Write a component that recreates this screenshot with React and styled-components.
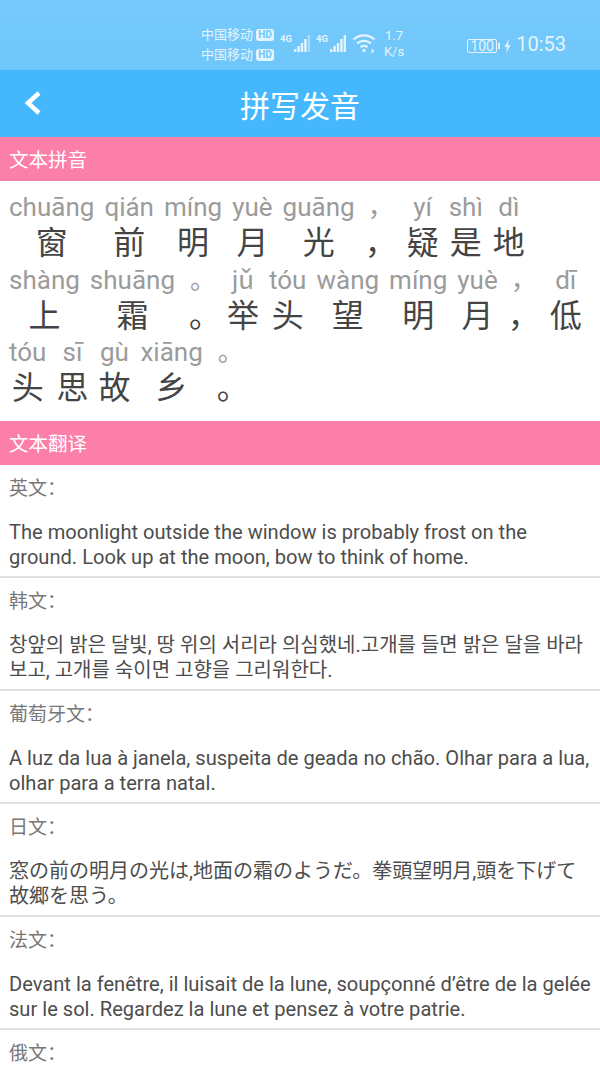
import styled, { createGlobalStyle } from "styled-components";

const Global = createGlobalStyle`
  html, body { margin: 0; padding: 0; background: #fff; }
  body { font-family: Roboto, "Noto Sans CJK SC", sans-serif; }
`;

const Page = styled.div`
  width: 600px;
  height: 1067px;
  overflow: hidden;
  background: #fff;
`;

const StatusBar = styled.div`
  height: 70px;
  box-sizing: border-box;
  padding: 26px 34px 0 201px;
  background: linear-gradient(#76cafb, #6fc6fa);
  color: #e4f4fe;
  display: flex;
  align-items: flex-start;
`;

const Carriers = styled.div`
  display: flex;
  flex-direction: column;
  gap: 3px;
  width: 79px;
`;

const Carrier = styled.div`
  display: flex;
  align-items: center;
  gap: 3px;
  height: 17px;
  font-size: 13px;
  line-height: 17px;
`;

const HdBadge = styled.span`
  width: 18px;
  height: 12px;
  border-radius: 3px;
  background: #e4f4fe;
  color: #6fc6fa;
  font-size: 10px;
  font-weight: 700;
  line-height: 12px;
  text-align: center;
`;

const SignalIcon = styled.svg`
  margin: 7px 4px 0 0;
`;

const WifiIcon = styled.svg`
  margin-top: 7px;
`;

const Speed = styled.div`
  width: 26px;
  margin-left: 3px;
  font-size: 13px;
  line-height: 16px;
  text-align: center;
  margin-top: 2px;
`;

const Battery = styled.div`
  margin: 12px 0 0 auto;
  display: flex;
  align-items: center;
  gap: 1px;
`;

const BatteryBody = styled.span`
  width: 30px;
  height: 14px;
  box-sizing: border-box;
  border: 1px solid #e4f4fe;
  border-radius: 2px;
  font-size: 14px;
  line-height: 12px;
  text-align: center;
`;

const Clock = styled.span`
  margin: 6px 0 0 4px;
  font-size: 20px;
  line-height: 24px;
`;

const NavBar = styled.div`
  height: 67px;
  background: #45b8fd;
  position: relative;
  display: flex;
  align-items: center;
  justify-content: center;
  color: #fff;
  font-size: 30px;
`;

const BackIcon = styled.svg`
  position: absolute;
  left: 24px;
  top: 20px;
`;

const SectionBar = styled.div`
  height: 44px;
  padding-left: 9px;
  background: #fb7fa9;
  color: #fff;
  font-size: 19.5px;
  line-height: 47px;
`;

const PinyinGrid = styled.div`
  height: 240px;
  box-sizing: border-box;
  padding: 9px 9px 0;
  display: flex;
  flex-wrap: wrap;
  align-content: flex-start;
  column-gap: 10px;
`;

const Cell = styled.div`
  height: 72.6px;
  display: flex;
  flex-direction: column;
  align-items: center;
`;

const Pinyin = styled.span`
  height: 34px;
  font-size: 26px;
  line-height: 34px;
  color: #9b9b9b;
  white-space: nowrap;
  text-indent: ${(p) => (p.$dot ? "4px" : "0")};
`;

const Hanzi = styled.span`
  width: 32px;
  height: 39px;
  font-size: 32px;
  line-height: 39px;
  color: #444;
  text-align: center;
  text-indent: ${(p) => (p.$dot ? "4px" : "0")};
`;

const Item = styled.div`
  height: 113px;
  box-sizing: border-box;
  padding: 12px 5px 0 9px;
  border-bottom: 2px solid #e0e0e0;
`;

const Label = styled.div`
  font-size: 19px;
  line-height: 24px;
  color: #777;
`;

const Body = styled.div`
  margin-top: 19px;
  font-size: ${(p) => (p.$cjk ? "20px" : "20.1px")};
  line-height: 25px;
  color: #4d4d4d;
  font-family: Roboto, ${(p) => p.$cjk || '"Noto Sans CJK SC"'}, sans-serif;
`;

const rows = [
  ["chuāng", "窗"], ["qián", "前"], ["míng", "明"], ["yuè", "月"], ["guāng", "光"], ["，", "，"],
  ["yí", "疑"], ["shì", "是"], ["dì", "地"],
  ["shàng", "上"], ["shuāng", "霜"], ["。", "。"], ["jǔ", "举"], ["tóu", "头"], ["wàng", "望"],
  ["míng", "明"], ["yuè", "月"], ["，", "，"], ["dī", "低"],
  ["tóu", "头"], ["sī", "思"], ["gù", "故"], ["xiāng", "乡"], ["。", "。"],
];

const items = [
  { label: "英文：", text: "The moonlight outside the window is probably frost on the ground. Look up at the moon, bow to think of home." },
  { label: "韩文：", cjk: '"Noto Sans CJK KR"', text: "창앞의 밝은 달빛, 땅 위의 서리라 의심했네.고개를 들면 밝은 달을 바라보고, 고개를 숙이면 고향을 그리워한다." },
  { label: "葡萄牙文：", text: "A luz da lua à janela, suspeita de geada no chão. Olhar para a lua, olhar para a terra natal." },
  { label: "日文：", cjk: '"Noto Sans CJK JP"', text: "窓の前の明月の光は,地面の霜のようだ。拳頭望明月,頭を下げて故郷を思う。" },
  { label: "法文：", text: "Devant la fenêtre, il luisait de la lune, soupçonné d’être de la gelée sur le sol. Regardez la lune et pensez à votre patrie." },
  { label: "俄文：", text: "" },
];

const barHeights = [3, 6, 9, 13, 17];

function Signal({ bars }) {
  return (
    <SignalIcon width="32" height="26" viewBox="0 0 32 26" fill="#e4f4fe">
      <text x="0" y="9" fontSize="9.500" fontWeight="700" fontFamily="Roboto">4G</text>
      {barHeights.map((h, i) => (
        <rect key={i} x={14 + i * 3.4} y={19 - h} width="2.400" height={h} opacity={i < bars ? 1 : 0.45} />
      ))}
    </SignalIcon>
  );
}

export default function App() {
  return (
    <Page>
      <Global />
      <StatusBar>
        <Carriers>
          <Carrier>中国移动<HdBadge>HD</HdBadge></Carrier>
          <Carrier>中国移动<HdBadge>HD</HdBadge></Carrier>
        </Carriers>
        <Signal bars={4} />
        <Signal bars={5} />
        <WifiIcon width="26" height="22" viewBox="0 0 26 22" fill="none" stroke="#e4f4fe" strokeWidth="2.200">
          <path d="M1.500 6.500c6-5.500 15-5.500 21 0" />
          <path d="M5 10.500c4.200-3.500 9.800-3.500 14 0" />
          <path d="M8.500 14c2.200-1.500 4.800-1.500 7 0" />
          <circle cx="12" cy="17.500" r="1.700" fill="#e4f4fe" stroke="none" />
          <path d="M19.500 15.500l3 2.500-3 2.500z" fill="#e4f4fe" stroke="none" />
        </WifiIcon>
        <Speed>1.7<br />K/s</Speed>
        <Battery>
          <BatteryBody>100</BatteryBody>
          <svg width="14" height="16" viewBox="0 0 14 16" fill="#e4f4fe">
            <rect x="0" y="5" width="2" height="6" />
            <path d="M11 1L6.500 9H9l-1 6 4.500-8H10z" />
          </svg>
        </Battery>
        <Clock>10:53</Clock>
      </StatusBar>
      <NavBar>
        <BackIcon width="18" height="26" viewBox="0 0 18 26" fill="none" stroke="#fff" strokeWidth="4.500">
          <path d="M15 3L4 13l11 10" />
        </BackIcon>
        拼写发音
      </NavBar>
      <SectionBar>文本拼音</SectionBar>
      <PinyinGrid>
        {rows.map(([py, hz], i) => (
          <Cell key={i}>
            <Pinyin $dot={py === "。"}>{py}</Pinyin>
            <Hanzi $dot={hz === "。"}>{hz}</Hanzi>
          </Cell>
        ))}
      </PinyinGrid>
      <SectionBar>文本翻译</SectionBar>
      {items.map((item) => (
        <Item key={item.label}>
          <Label>{item.label}</Label>
          <Body $cjk={item.cjk}>{item.text}</Body>
        </Item>
      ))}
    </Page>
  );
}
